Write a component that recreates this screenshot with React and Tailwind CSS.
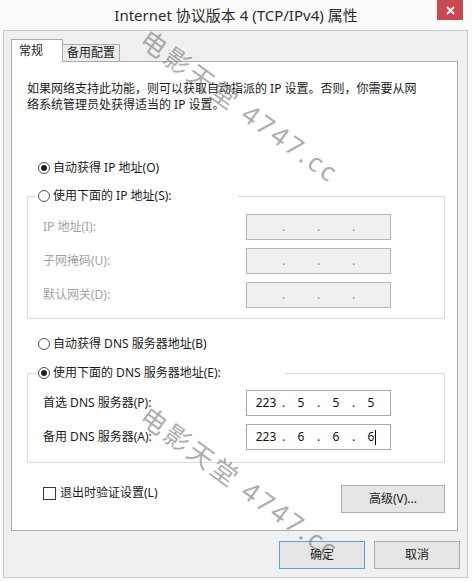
const FIELD_GAP = 'flex flex-col gap-[8px]';

function Radio({ checked, label }) {
  return (
    <div className="flex h-4 items-center gap-[3px]">
      <span className="flex h-[12px] w-[12px] items-center justify-center rounded-full border border-[#4d4d4d] bg-white">
        {checked && <span className="h-[6px] w-[6px] rounded-full bg-[#1f1f1f]" />}
      </span>
      <span>{label}</span>
    </div>
  );
}

function IpBox({ octets = ['', '', '', ''], disabled = false, caret = false }) {
  return (
    <div
      className={
        'flex h-[26px] w-[145px] items-center border pl-[3px] ' +
        (disabled ? 'border-[#b5b5b5] bg-[#f0f0f0] text-[#8a8a8a]' : 'border-[#a9a9a9] bg-white text-[#111]')
      }
    >
      {octets.map((o, i) => (
        <div key={i} className="flex items-center">
          <span className="relative w-[32px] text-center">
            {o}
            {caret && i === 3 && <span className="absolute top-[1px] left-[20px] h-[15px] w-px bg-black" />}
          </span>
          {i < 3 && <span className="w-[3px] text-center">.</span>}
        </div>
      ))}
    </div>
  );
}

function Row({ label, children, disabled }) {
  return (
    <div className="flex items-center">
      <span className={'w-[203px] ' + (disabled ? 'text-[#a3a3a3]' : '')}>{label}</span>
      {children}
    </div>
  );
}

function Button({ children, primary, className = '' }) {
  return (
    <div
      className={
        'flex h-[28px] items-center justify-center border bg-[#e5e5e5] ' +
        (primary ? 'border-[#58a0dc]' : 'border-[#adadad]') +
        ' ' +
        className
      }
    >
      {children}
    </div>
  );
}

function Watermark({ className }) {
  return (
    <span
      className={
        'pointer-events-none absolute -translate-x-1/2 -translate-y-1/2 rotate-[36deg] whitespace-nowrap text-[26px] leading-none tracking-[3px] text-[rgba(120,120,120,0.62)] ' +
        className
      }
    >
      电影天堂 4747.cc
    </span>
  );
}

export default function App() {
  return (
    <div className="relative h-[581px] w-[472px] overflow-hidden bg-[#fbfbfb] font-['Noto_Sans','Noto_Sans_CJK_SC',sans-serif] text-[12px] leading-4 text-[#1a1a1a]">
      {/* title bar */}
      <div className="grid h-[30px] grid-cols-[1fr_auto_1fr]">
        <div />
        <div className="pt-[5px] text-[15px] leading-5 text-[#2b2b2b]">Internet 协议版本 4 (TCP/IPv4) 属性</div>
        <div className="flex justify-end pr-[9px]">
          <div className="flex h-[20px] w-[26px] items-center justify-center bg-[#c9474f]">
            <svg width="9" height="9" viewBox="0 0 9 9">
              <path d="M1 1 L8 8 M8 1 L1 8" stroke="#fff" strokeWidth="1.8" />
            </svg>
          </div>
        </div>
      </div>

      {/* client area */}
      <div className="ml-[3px] flex h-[548px] w-[465px] flex-col border border-[#c9c9c9] bg-[#f0f0f0] pt-[8px] pl-[7px]">
        <div className="flex items-end">
          <div className="relative z-10 -mb-px h-[23px] w-[52px] border-x border-t border-[#acacac] bg-white pt-[3px] pl-[7px]">
            常规
          </div>
          <div className="flex h-[17px] w-[57px] items-center justify-center border-t border-r border-[#acacac] bg-[#ececec]">
            备用配置
          </div>
        </div>

        <div className="flex w-[447px] flex-col border border-[#acacac] bg-white pt-[19px] pr-[12px] pb-[17px] pl-[15px]">
          <p>
            如果网络支持此功能，则可以获取自动指派的 IP 设置。否则，你需要从网
            <br />
            络系统管理员处获得适当的 IP 设置。
          </p>

          <div className="mt-[47px] ml-[11px]">
            <Radio checked label="自动获得 IP 地址(O)" />
          </div>

          <fieldset className="mt-[12px] border border-[#dcdcdc] px-0">
            <legend className="ml-[9px] w-[201px] pl-px">
              <Radio label="使用下面的 IP 地址(S):" />
            </legend>
            <div className={FIELD_GAP + ' pt-[10px] pb-[10px] pl-[15px]'}>
              <Row label="IP 地址(I):" disabled>
                <IpBox disabled />
              </Row>
              <Row label="子网掩码(U):" disabled>
                <IpBox disabled />
              </Row>
              <Row label="默认网关(D):" disabled>
                <IpBox disabled />
              </Row>
            </div>
          </fieldset>

          <div className="mt-[17px] ml-[11px]">
            <Radio label="自动获得 DNS 服务器地址(B)" />
          </div>

          <fieldset className="mt-[13px] border border-[#dcdcdc] px-0">
            <legend className="ml-[9px] w-[248px] pl-px">
              <Radio checked label="使用下面的 DNS 服务器地址(E):" />
            </legend>
            <div className={FIELD_GAP + ' pt-[9px] pb-[12px] pl-[15px]'}>
              <Row label="首选 DNS 服务器(P):">
                <IpBox octets={['223', '5', '5', '5']} />
              </Row>
              <Row label="备用 DNS 服务器(A):">
                <IpBox octets={['223', '6', '6', '6']} caret />
              </Row>
            </div>
          </fieldset>

          <div className="mt-[22px] flex items-start justify-between pl-[16px]">
            <div className="flex h-4 items-center gap-[4px]">
              <span className="h-[13px] w-[13px] border border-[#3a3a3a] bg-white" />
              <span>退出时验证设置(L)</span>
            </div>
            <Button className="w-[104px]">高级(V)...</Button>
          </div>
        </div>

        <div className="mt-[10px] flex justify-end gap-[9px] pr-[7px]">
          <Button primary className="w-[86px]">确定</Button>
          <Button className="w-[86px]">取消</Button>
        </div>
      </div>

      <Watermark className="top-[106px] left-[240px]" />
      <Watermark className="top-[483px] left-[240px]" />
    </div>
  );
}
